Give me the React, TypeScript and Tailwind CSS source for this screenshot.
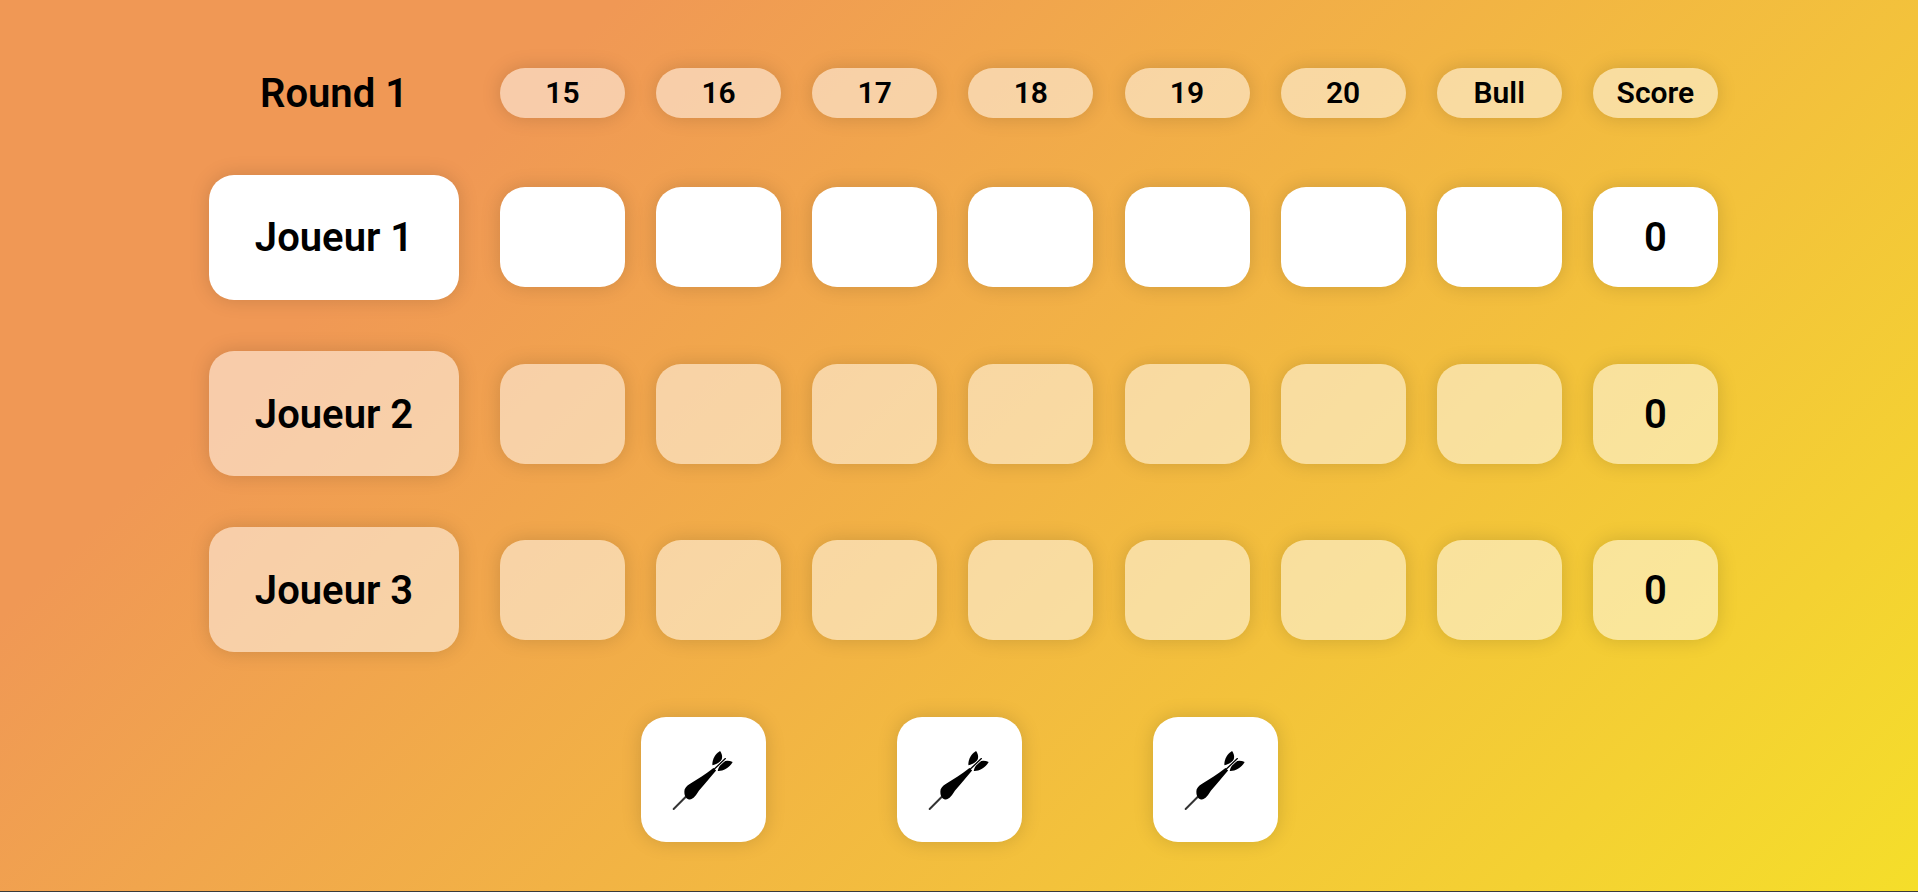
const columns = ["15", "16", "17", "18", "19", "20", "Bull"];
const players = [
  { name: "Joueur 1", active: true },
  { name: "Joueur 2", active: false },
  { name: "Joueur 3", active: false },
];

function DartIcon() {
  return (
    <svg viewBox="152 140 196 196" className="h-[65px] w-[65px]" fill="#000">
      <path d="M160 327 L196 291" stroke="#333" strokeWidth="6" strokeLinecap="round" />
      <path d="M206 298 C197 296 190 285 193 268 C197 258 204 254 212 249 C232 237 256 222 280 203 L288 211 C270 232 252 254 236 272 C228 284 219 300 206 298 Z" />
      <path d="M277 195 C275 181 284 161 300 152 C309 165 308 179 298 186 C292 190 284 193 277 195 Z" />
      <path d="M293 212 C307 213 327 205 338 185 C325 180 310 180 303 190 C298 197 295 204 293 212 Z" />
      <path d="M288 201 L316 175" stroke="#fff" strokeWidth="9" strokeLinecap="butt" />
      <path d="M282 207 L316 175" stroke="#000" strokeWidth="4" strokeLinecap="round" />
    </svg>
  );
}

export default function App() {
  return (
    <div className="flex h-[892px] flex-col border-b border-[#3a3a3a] bg-[linear-gradient(135deg,#f09855_22%,#f5de2a_100%)] pl-[209px] pt-[68px] font-['Roboto',sans-serif] text-black">
      {/* header row */}
      <div className="flex h-[50px] items-center">
        <div className="w-[250px] pt-[2px] text-center text-[40px] font-semibold">Round 1</div>
        <div className="ml-[41px] flex gap-[31.14px]">
          {columns.map((c) => (
            <div
              key={c}
              className="flex h-[50px] w-[125px] items-center justify-center rounded-[25px] bg-white/50 pb-[2px] text-[30px] font-semibold shadow-[0_0_20px_rgba(0,0,0,0.15)]"
            >
              {c}
            </div>
          ))}
          <div className="flex h-[50px] w-[125px] items-center justify-center rounded-[25px] bg-white/50 pb-[2px] text-[30px] font-semibold shadow-[0_0_20px_rgba(0,0,0,0.15)]">
            Score
          </div>
        </div>
      </div>

      {/* players */}
      <div className="mt-[56.6px] flex flex-col gap-[51.45px]">
        {players.map((p) => (
          <div key={p.name} className="flex items-center">
            <div
              className={
                p.active
                  ? "flex h-[125px] w-[250px] items-center justify-center rounded-[25px] bg-white pt-[2px] text-[40px] font-semibold shadow-[0_0_20px_rgba(0,0,0,0.15)]"
                  : "flex h-[125px] w-[250px] items-center justify-center rounded-[25px] bg-white/50 pt-[2px] text-[40px] font-semibold shadow-[0_0_20px_rgba(0,0,0,0.15)]"
              }
            >
              {p.name}
            </div>
            <div className="ml-[41px] flex gap-[31.14px]">
              {columns.map((c) => (
                <div
                  key={c}
                  className={
                    p.active
                      ? "h-[100px] w-[125px] rounded-[25px] bg-white shadow-[0_0_20px_rgba(0,0,0,0.15)]"
                      : "h-[100px] w-[125px] rounded-[25px] bg-white/50 shadow-[0_0_20px_rgba(0,0,0,0.15)]"
                  }
                />
              ))}
              <div
                className={
                  p.active
                    ? "flex h-[100px] w-[125px] items-center justify-center rounded-[25px] bg-white pt-[2px] text-[40px] font-semibold shadow-[0_0_20px_rgba(0,0,0,0.15)]"
                    : "flex h-[100px] w-[125px] items-center justify-center rounded-[25px] bg-white/50 pt-[2px] text-[40px] font-semibold shadow-[0_0_20px_rgba(0,0,0,0.15)]"
                }
              >
                0
              </div>
            </div>
          </div>
        ))}
      </div>

      {/* darts left */}
      <div className="ml-[432px] mt-[64.6px] flex gap-[131px]">
        {[0, 1, 2].map((i) => (
          <div
            key={i}
            className="flex h-[125px] w-[125px] items-center justify-center rounded-[25px] bg-white shadow-[0_0_20px_rgba(0,0,0,0.15)]"
          >
            <DartIcon />
          </div>
        ))}
      </div>
    </div>
  );
}
